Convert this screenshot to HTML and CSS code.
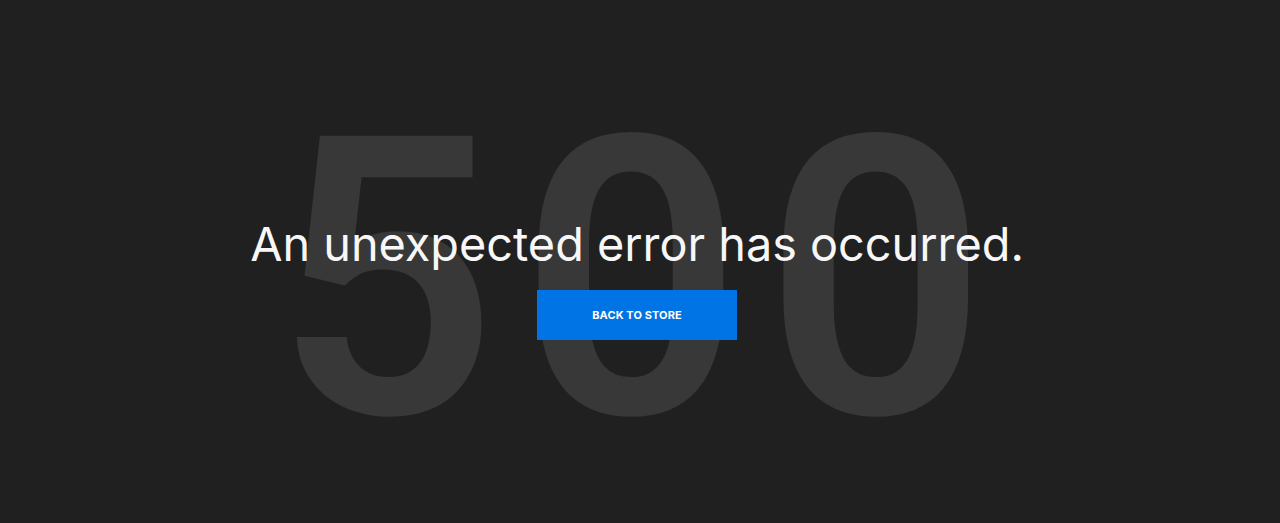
FILE: index.html
```html
<!DOCTYPE html>
<html lang="en">
<head>
<meta charset="utf-8">
<title>Error 500</title>
<link rel="stylesheet" href="styles.css">
</head>
<body>
<main class="error-page">
  <div class="error-code" aria-hidden="true">500</div>
  <div class="error-content">
    <h1 class="error-title">An unexpected error has occurred.</h1>
    <a class="store-button" href="#">BACK TO STORE</a>
  </div>
</main>
</body>
</html>
```
FILE: styles.css
```css
html, body {
  margin: 0;
  padding: 0;
  background: #202020;
}
body {
  font-family: Inter, "Noto Sans", sans-serif;
  color: #f5f5f5;
}
.error-page {
  display: grid;
  place-items: center;
  height: 523px;
  padding: 30px 6px 0 0;
  box-sizing: border-box;
  overflow: hidden;
}
.error-code,
.error-content {
  grid-area: 1 / 1;
}
.error-code {
  font-family: Roboto, sans-serif;
  font-size: 390px;
  font-weight: 600;
  line-height: 1;
  color: #383838;
  letter-spacing: 22px;
  padding-left: 10px;
  margin-top: 6px;
}
.error-content {
  display: flex;
  flex-direction: column;
  align-items: center;
  position: relative;
}
.error-title {
  margin: 0 0 16px;
  font-size: 46.8px;
  font-weight: 400;
  line-height: 60px;
  color: #f7f7f7;
}
.store-button {
  display: flex;
  align-items: center;
  justify-content: center;
  width: 200px;
  height: 50px;
  background: #0074e4;
  color: #ffffff;
  font-size: 11px;
  font-weight: 700;
  letter-spacing: 0.1px;
  text-decoration: none;
}
```
